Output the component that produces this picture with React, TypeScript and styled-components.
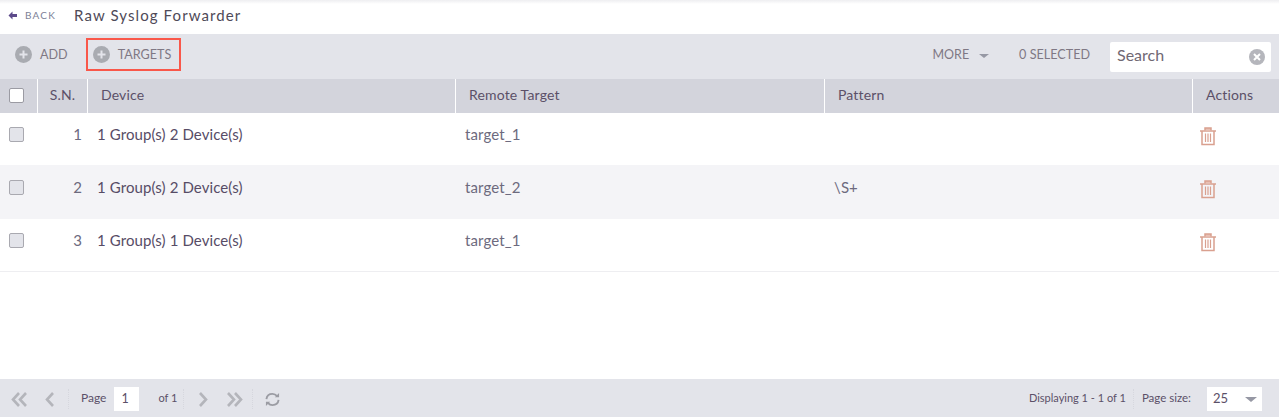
import React from "react";
import styled, { createGlobalStyle } from "styled-components";

const Global = createGlobalStyle`
  html, body { margin: 0; padding: 0; background: #fff; }
  body { font-family: "Lato", "Open Sans", sans-serif; color: #5b5068; }
  * { box-sizing: border-box; }
`;

const Page = styled.div`
  display: flex;
  flex-direction: column;
  height: 417px;
  width: 1279px;
  overflow: hidden;
`;

const TitleBar = styled.header`
  height: 34px;
  display: flex;
  align-items: center;
  padding: 0 0 4px 8px;
  background: linear-gradient(#eeeef1 0, #fff 4px);
`;

const BackLink = styled.a`
  display: flex;
  align-items: center;
  gap: 8px;
  width: 66px;
  font-size: 10px;
  letter-spacing: 1.2px;
  color: #7c7f96;
`;

const Title = styled.h1`
  margin: 0 0 1px;
  font-size: 15px;
  font-weight: 400;
  letter-spacing: 1.1px;
  color: #4f4a58;
`;

const Toolbar = styled.div`
  height: 45px;
  background: #e3e4ea;
  display: flex;
  align-items: center;
  padding: 0 8px 4px;
`;

const ToolButton = styled.button<{ $boxed?: boolean }>`
  display: flex;
  align-items: center;
  gap: 8px;
  height: 33px;
  border: 2px solid ${(p) => (p.$boxed ? "#f9574a" : "transparent")};
  background: transparent;
  padding: 0 8px 0 5px;
  margin: 0 0 0 ${(p) => (p.$boxed ? "8px" : "0")};
  font: 400 12.6px "Lato", sans-serif;
  color: #7f7884;
`;

const ToolbarSpacer = styled.div`
  flex: 1;
`;

const MoreMenu = styled.div`
  display: flex;
  align-items: center;
  gap: 10px;
  font-size: 12.5px;
  color: #7f7884;
  margin-right: 30px;
`;

const Caret = styled.span<{ $size?: number }>`
  width: 0;
  height: 0;
  margin-top: 2px;
  border-left: ${(p) => p.$size ?? 5}px solid transparent;
  border-right: ${(p) => p.$size ?? 5}px solid transparent;
  border-top: ${(p) => (p.$size ?? 5) - 1}px solid #9698a4;
`;

const SelectedCount = styled.span`
  font-size: 12.6px;
  color: #7f7884;
  margin-right: 20px;
`;

const SearchBox = styled.div`
  width: 161px;
  height: 30px;
  margin-top: 5px;
  background: #fff;
  border-radius: 2px;
  display: flex;
  align-items: center;
  justify-content: space-between;
  padding: 0 6px 0 7px;
`;

const SearchLabel = styled.span`
  padding-bottom: 6px;
  font-size: 16px;
  color: #6f6873;
`;

const Table = styled.div`
  flex: 1;
`;

const columns = "37px 50px 368px 369px 368px 87px";

const HeaderRow = styled.div`
  display: grid;
  grid-template-columns: ${columns};
  height: 34px;
  background: #d3d4dc;
`;

const HeaderCell = styled.div<{ $center?: boolean }>`
  display: flex;
  align-items: center;
  justify-content: ${(p) => (p.$center ? "center" : "flex-start")};
  padding: 0 0 4px ${(p) => (p.$center ? "0" : "13px")};
  border-left: 1px solid #fff;
  font-size: 14px;
  letter-spacing: 0.15px;
  color: #5b5068;
`;

const Row = styled.div<{ $height: number; $striped?: boolean; $ruled?: boolean }>`
  display: grid;
  grid-template-columns: ${columns};
  height: ${(p) => p.$height}px;
  background: ${(p) => (p.$striped ? "#f4f4f7" : "#fff")};
  border-bottom: ${(p) => (p.$ruled ? "1px solid #eeeef1" : "0")};
`;

const Cell = styled.div<{ $number?: boolean; $muted?: boolean }>`
  display: flex;
  align-items: center;
  justify-content: ${(p) => (p.$number ? "flex-end" : "flex-start")};
  padding: ${(p) => (p.$number ? "0 5px 10px 0" : "0 0 10px 10px")};
  font-size: 15px;
  letter-spacing: 0.1px;
  line-height: 17px;
  color: ${(p) => (p.$muted ? "#6d6a7e" : "#574c66")};
`;

const Check = styled.span<{ $white?: boolean }>`
  display: block;
  width: 15px;
  height: 15px;
  border-radius: 2px;
  background: ${(p) => (p.$white ? "#fff" : "#e3e4ea")};
  border: 1px solid ${(p) => (p.$white ? "#9b9ba3" : "#a9a9b0")};
`;

const CheckCell = styled.div<{ $inHeader?: boolean }>`
  display: flex;
  justify-content: center;
  align-items: center;
  padding: 0 4px ${(p) => (p.$inHeader ? "2px" : "9px")} 0;
`;

const IconCell = styled.div`
  display: flex;
  align-items: center;
  padding: 0 0 6px 8px;
`;

const Footer = styled.footer`
  height: 38px;
  background: #e3e4ea;
  display: flex;
  align-items: center;
  padding: 2px 17px 0 11px;
  font-size: 12px;
  color: #5b5068;
`;

const PagerIcon = styled.span<{ $gap?: number }>`
  display: flex;
  margin-right: ${(p) => p.$gap ?? 0}px;
`;

const Divider = styled.span<{ $before: number; $after: number }>`
  width: 1px;
  height: 20px;
  margin: 0 ${(p) => p.$after}px 0 ${(p) => p.$before}px;
  border-left: 1px dotted #d6d7de;
`;

const FooterLabel = styled.span<{ $size: number }>`
  padding-bottom: 3px;
  font-size: ${(p) => p.$size}px;
`;

const PageInput = styled.div`
  width: 25px;
  height: 24px;
  margin: 0 19px 0 8px;
  padding: 4px 0 0 7px;
  background: #fff;
  font-size: 12.5px;
  color: #5b5068;
`;

const FooterSpacer = styled.div`
  flex: 1;
`;

const SizeSelect = styled.div`
  width: 55px;
  height: 24px;
  margin-left: 16px;
  padding: 0 5px 2px 6px;
  background: #fff;
  display: flex;
  align-items: center;
  justify-content: space-between;
  font-size: 13px;
`;

const PlusIcon = () => (
  <svg width="17" height="17" viewBox="0 0 17 17">
    <circle cx="8.5" cy="8.5" r="8.5" fill="#a9abb1" />
    <path d="M8.5 4.5v8M4.5 8.5h8" stroke="#e3e4ea" strokeWidth="2" />
  </svg>
);

const ClearIcon = () => (
  <svg width="16" height="16" viewBox="0 0 16 16">
    <circle cx="8" cy="8" r="8" fill="#b5b6bc" />
    <path d="M5 5l6 6M11 5l-6 6" stroke="#fff" strokeWidth="2" />
  </svg>
);

const BackArrow = () => (
  <svg width="9" height="9" viewBox="0 0 9 9">
    <path d="M4.5 0.5L0.5 4.5l4 4V6H9V3H4.5z" fill="#5c4a8a" />
  </svg>
);

const TrashIcon = () => (
  <svg width="16" height="19" viewBox="0 0 16 19" fill="none" stroke="#d9a08f" strokeWidth="1.5">
    <path d="M0 4h16" />
    <path d="M5 3.5V1h6v2.5" fill="#e8c0b4" />
    <path d="M2 4v13.5h12V4" />
    <path d="M5.5 6.5v8.5M8 6.5v8.5M10.5 6.5v8.5" strokeWidth="1.2" />
  </svg>
);

const Chevron = ({ dir, double }: { dir: "l" | "r"; double?: boolean }) => {
  const one = dir === "l" ? "M8 2L2 8.5 8 15" : "M2 2l6 6.5L2 15";
  const two = dir === "l" ? "M15 2L9 8.5 15 15" : "M9 2l6 6.5L9 15";
  return (
    <svg width={double ? 17 : 10} height="17" viewBox={double ? "0 0 17 17" : "0 0 10 17"} fill="none" stroke="#b4b5bb" strokeWidth="2.6">
      <path d={one} />
      {double && <path d={two} />}
    </svg>
  );
};

const RefreshIcon = () => (
  <svg width="15" height="15" viewBox="0 0 16 15" fill="none" stroke="#9b9ca3" strokeWidth="2">
    <path d="M1.500 7C2 3.500 4.500 1.500 8 1.500c2 0 3.500.8 5 2.500" />
    <path d="M14.500 8c-.5 3.500-3 5.500-6.500 5.500-2 0-3.500-.8-5-2.500" />
    <path d="M15 0.500V5h-4.500zM1 14.500V10h4.500z" fill="#9b9ca3" stroke="none" />
  </svg>
);

const rows = [
  { sn: 1, device: "1 Group(s) 2 Device(s)", target: "target_1", pattern: "", height: 52 },
  { sn: 2, device: "1 Group(s) 2 Device(s)", target: "target_2", pattern: "\\S+", height: 54, striped: true },
  { sn: 3, device: "1 Group(s) 1 Device(s)", target: "target_1", pattern: "", height: 53, ruled: true },
];

export default function App() {
  return (
    <Page>
      <Global />
      <TitleBar>
        <BackLink>
          <BackArrow />
          BACK
        </BackLink>
        <Title>Raw Syslog Forwarder</Title>
      </TitleBar>
      <Toolbar>
        <ToolButton>
          <PlusIcon />
          ADD
        </ToolButton>
        <ToolButton $boxed>
          <PlusIcon />
          TARGETS
        </ToolButton>
        <ToolbarSpacer />
        <MoreMenu>
          MORE
          <Caret />
        </MoreMenu>
        <SelectedCount>0 SELECTED</SelectedCount>
        <SearchBox>
          <SearchLabel>Search</SearchLabel>
          <ClearIcon />
        </SearchBox>
      </Toolbar>
      <Table>
        <HeaderRow>
          <CheckCell $inHeader>
            <Check $white />
          </CheckCell>
          <HeaderCell $center>S.N.</HeaderCell>
          <HeaderCell>Device</HeaderCell>
          <HeaderCell>Remote Target</HeaderCell>
          <HeaderCell>Pattern</HeaderCell>
          <HeaderCell>Actions</HeaderCell>
        </HeaderRow>
        {rows.map((r) => (
          <Row key={r.sn} $height={r.height} $striped={r.striped} $ruled={r.ruled}>
            <CheckCell>
              <Check />
            </CheckCell>
            <Cell $number $muted>
              {r.sn}
            </Cell>
            <Cell>{r.device}</Cell>
            <Cell $muted>{r.target}</Cell>
            <Cell $muted>{r.pattern}</Cell>
            <IconCell>
              <TrashIcon />
            </IconCell>
          </Row>
        ))}
      </Table>
      <Footer>
        <PagerIcon $gap={17}>
          <Chevron dir="l" double />
        </PagerIcon>
        <PagerIcon>
          <Chevron dir="l" />
        </PagerIcon>
        <Divider $before={13} $after={12} />
        <FooterLabel $size={12}>Page</FooterLabel>
        <PageInput>1</PageInput>
        <FooterLabel $size={11}>of 1</FooterLabel>
        <Divider $before={6} $after={14} />
        <PagerIcon $gap={18}>
          <Chevron dir="r" />
        </PagerIcon>
        <PagerIcon>
          <Chevron dir="r" double />
        </PagerIcon>
        <Divider $before={9} $after={12} />
        <RefreshIcon />
        <FooterSpacer />
        <FooterLabel $size={11}>Displaying 1 - 1 of 1</FooterLabel>
        <Divider $before={7} $after={8} />
        <FooterLabel $size={11.5}>Page size:</FooterLabel>
        <SizeSelect>
          25
          <Caret $size={6} />
        </SizeSelect>
      </Footer>
    </Page>
  );
}
